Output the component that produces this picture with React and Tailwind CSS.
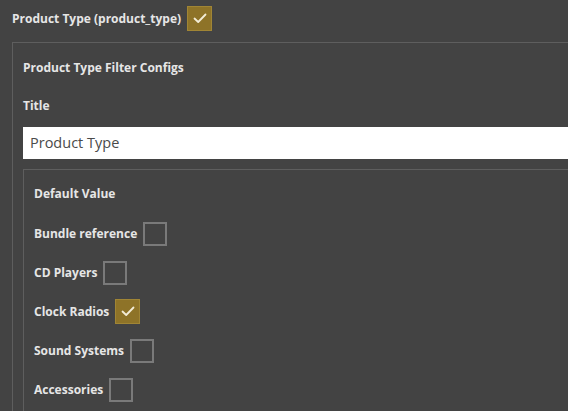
import React from "react";

function Box({ checked }) {
  if (checked) {
    return (
      <span className="inline-flex items-center justify-center w-[25px] h-[25px] bg-[#8e7328] border border-[#a08535] shrink-0">
        <svg width="14" height="11" viewBox="0 0 14 11" fill="none">
          <path d="M1.5 5.5 L5.2 9 L12.5 1.5" stroke="#f3ecd6" strokeWidth="1.8" strokeLinecap="round" strokeLinejoin="round" />
        </svg>
      </span>
    );
  }
  return <span className="inline-block w-[24px] h-[24px] border-2 border-[#7a7a7a] shrink-0" />;
}

const items = [
  ["Bundle reference", false],
  ["CD Players", false],
  ["Clock Radios", true],
  ["Sound Systems", false],
  ["Accessories", false],
];

export default function App() {
  return (
    <div
      className="w-[568px] h-[411px] bg-[#434343] overflow-hidden text-[#e6e6e6] font-bold text-[12px]"
      style={{ fontFamily: '"Open Sans", "DejaVu Sans", sans-serif' }}
    >
      <div className="h-[42px] pl-[12px] pt-[6px] flex items-start gap-[6px]">
        <span className="h-[25px] leading-[25px]">Product Type (product_type)</span>
        <Box checked />
      </div>
      <div className="ml-[12px] border-l border-t border-[#5e5e5e] pl-[10px]">
        <div className="h-[50px] flex items-center">Product Type Filter Configs</div>
        <div className="h-[26px] flex items-center">Title</div>
        <div className="mt-[8px] h-[32px] bg-white flex items-center pl-[7px] text-[14.5px] font-normal text-[#4a4a4a]">
          Product Type
        </div>
        <div className="mt-[10px] border-l border-t border-[#5e5e5e] pl-[10px] h-[300px]">
          <div className="h-[44px] flex items-center pt-[4px]">Default Value</div>
          {items.map(([label, c]) => (
            <div key={label} className="h-[39px] flex items-center gap-[6px]">
              <span>{label}</span>
              <Box checked={c} />
            </div>
          ))}
        </div>
      </div>
    </div>
  );
}
